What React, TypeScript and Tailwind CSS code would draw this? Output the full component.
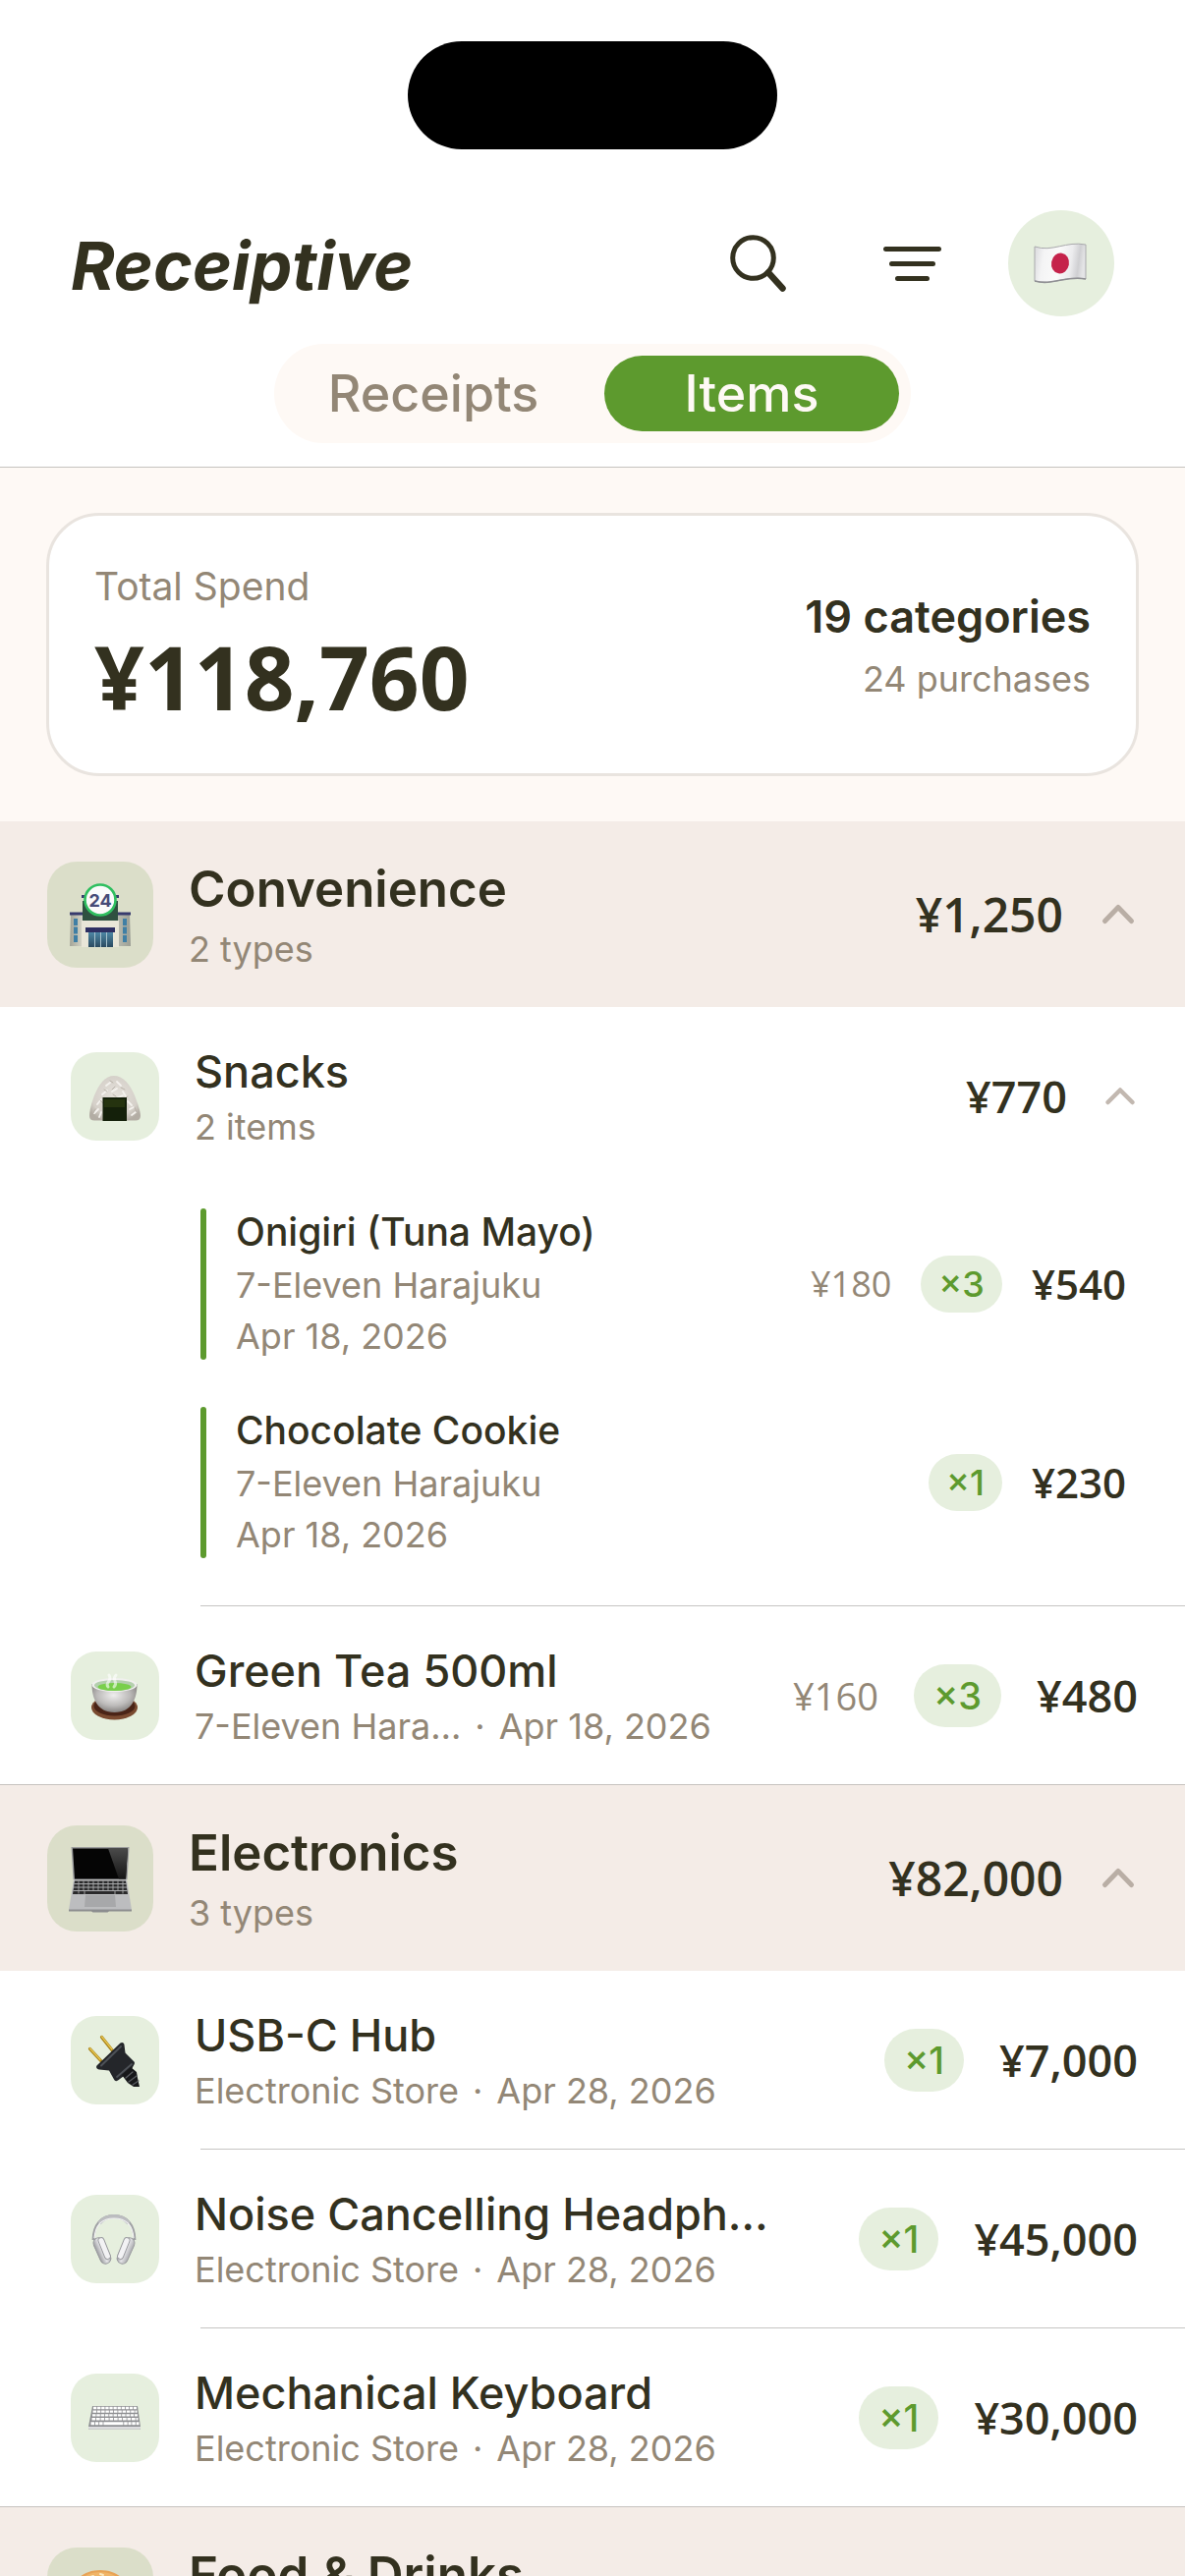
import type { ReactNode } from "react";

/* ---------- emoji artwork ---------- */

function FlagArt() {
  return (
    <svg viewBox="0 0 108 108" className="size-full" aria-hidden="true">
      <defs>
        <linearGradient id="flag" x1="0" x2="1" y1="0" y2="0.1">
          <stop offset="0" stopColor="#d9d9dc" />
          <stop offset="0.2" stopColor="#f4f4f5" />
          <stop offset="0.5" stopColor="#fafafa" />
          <stop offset="0.75" stopColor="#ececee" />
          <stop offset="0.9" stopColor="#cfcfd2" />
          <stop offset="1" stopColor="#e4e4e6" />
        </linearGradient>
      </defs>
      <path d="M27 37c18 6 32-6 52-2v35c-20-4-34 7-52 2z" fill="url(#flag)" stroke="#a9a9ac" strokeWidth="1" />
      <path d="M27 72c18 5 32-6 52-2" fill="none" stroke="#8f8f93" strokeWidth="1.6" />
      <ellipse cx="53" cy="54" rx="9" ry="10.5" fill="#c5234b" transform="rotate(10 53 54)" />
    </svg>
  );
}

function StoreArt() {
  return (
    <svg viewBox="0 0 108 108" className="size-full" aria-hidden="true">
      <defs>
        <linearGradient id="wing" x1="0" x2="1">
          <stop offset="0" stopColor="#a3a497" />
          <stop offset="1" stopColor="#d9d8cb" />
        </linearGradient>
        <linearGradient id="wingRight" x1="0" x2="1">
          <stop offset="0" stopColor="#b9bbb0" />
          <stop offset="1" stopColor="#9c9f95" />
        </linearGradient>
        <linearGradient id="door" x1="0" x2="0" y1="0" y2="1">
          <stop offset="0" stopColor="#4d87a5" />
          <stop offset="1" stopColor="#2b4a60" />
        </linearGradient>
      </defs>
      <path d="M24 54h13v32H23z" fill="url(#wing)" />
      <path d="M71 54h13l1 32H71z" fill="url(#wingRight)" />
      <path d="M23 51.500h14v3H23zM71 51.500h14v3H71zM35 34h38v3H35z" fill="#373a6d" />
      <path d="M36 40h36v20H36z" fill="#2f5140" />
      <path d="M35 60h38v27H35z" fill="#e9e6d8" />
      <path d="M27 58h4v7h-4zM27 66.500h4v7h-4zM27 75h4v7h-4zM77 58h4v7h-4zM77 66.500h4v7h-4zM77 75h4v7h-4z" fill="#3f7fa5" />
      <path d="M39 67h30v5H39z" fill="#2e2f62" />
      <path d="M42 72h25v15H42z" fill="url(#door)" />
      <path d="M48.500 72v15M54.500 72v15M60.500 72v15" stroke="#a8c2cd" strokeWidth="1" />
      <circle cx="54" cy="39" r="15.500" fill="#fbfbfb" stroke="#2fbf60" strokeWidth="2.600" />
      <text x="54" y="45.500" textAnchor="middle" fontSize="18" fontWeight="700" fontFamily="Inter, sans-serif" fill="#474b78">24</text>
    </svg>
  );
}

function LaptopArt() {
  return (
    <svg viewBox="0 0 108 108" className="size-full" aria-hidden="true">
      <defs>
        <linearGradient id="glare" x1="0" x2="0" y1="0" y2="1">
          <stop offset="0" stopColor="#4a4a4a" />
          <stop offset="1" stopColor="#161616" />
        </linearGradient>
      </defs>
      <path d="M24.500 22h59l-2 33h-55z" fill="#9a9b9c" />
      <path d="M26 23.500h56l-2 31H28z" fill="#050505" />
      <path d="M62 23.500h20l-2 31H73z" fill="url(#glare)" />
      <path d="M27 55h54l5 31H22z" fill="#bcbdbf" />
      <path d="M28 56.500h52l2 13.500H26z" fill="#2a2a2b" />
      <path d="M27.500 59.500h53M27 63h54M26.500 66.500h55" stroke="#b9babc" strokeWidth="0.9" />
      <path d="M32 56.500v13M37 56.500v10M42 56.500v10M47 56.500v10M52 56.500v10M57 56.500v10M62 56.500v10M67 56.500v10M72 56.500v10M77 56.500v13M38 67v3M69 67v3" stroke="#a9aaac" strokeWidth="0.9" />
      <path d="M39 71h30l1 12H38z" fill="#a7a8aa" />
      <path d="M22 85.500h64v2H63l-1.500 1h-15l-1.500-1H22z" fill="#8c8d8f" />
    </svg>
  );
}

function OnigiriArt() {
  return (
    <svg viewBox="0 0 90 90" className="size-full" aria-hidden="true">
      <defs>
        <radialGradient id="rice" cx="0.5" cy="0.45" r="0.6">
          <stop offset="0" stopColor="#e6e2dc" />
          <stop offset="0.75" stopColor="#d5d0c9" />
          <stop offset="1" stopColor="#b3ada4" />
        </radialGradient>
      </defs>
      <path d="M44 24c9 0 16 8 21 20 3 8 6 16 6 21 0 3-2 4.500-5 4.500H24c-3 0-5-1.500-5-4.500 0-5 2-13 5-21 5-12 11-20 20-20z" fill="url(#rice)" />
      <path d="M36 34l4-3M47 30l4 4M32 43l5-4M42 40l5-3M53 40l3 5M27 53l4-5M36 47l4 2M48 46l5-2M58 50l4 4M24 62l4-4M29 66l2-5M62 64l4-3M60 58l4-2" stroke="#f4f2ee" strokeWidth="1.800" strokeLinecap="round" />
      <path d="M40 29l3 2M34 38l3 2M45 35l-3 3M51 36l4 2M30 49l3 3M43 43l3 2M55 47l3-2M25 58l-2 4M65 56l2 5" stroke="#b9b3aa" strokeWidth="1" strokeLinecap="round" />
      <path d="M32.500 46h24.500v24H32.500z" fill="#14200a" />
      <path d="M34 48h21v8H34z" fill="#25330f" />
    </svg>
  );
}

function TeaArt() {
  return (
    <svg viewBox="0 0 90 90" className="size-full" aria-hidden="true">
      <defs>
        <radialGradient id="cup" cx="0.48" cy="0.4" r="0.6">
          <stop offset="0" stopColor="#efeeee" />
          <stop offset="0.6" stopColor="#bdbbba" />
          <stop offset="1" stopColor="#858280" />
        </radialGradient>
      </defs>
      <ellipse cx="44.500" cy="57" rx="23.500" ry="12.500" fill="#7a4a30" />
      <ellipse cx="44.500" cy="55.500" rx="21" ry="10" fill="#4a2417" />
      <path d="M21.500 33c0 14 5 29 23 29s23-15 23-29z" fill="url(#cup)" />
      <ellipse cx="44.500" cy="34" rx="23" ry="7" fill="#f0f0ee" />
      <ellipse cx="44.500" cy="34.500" rx="20.500" ry="5.500" fill="#b4cfae" />
      <ellipse cx="44.500" cy="36" rx="17" ry="4" fill="#79cf4c" />
      <path d="M38 36c-4-4 5-6 1-12M44 36c5-5-3-7 2-12" fill="none" stroke="#ffffff" strokeOpacity="0.6" strokeWidth="3" strokeLinecap="round" />
    </svg>
  );
}

function PlugArt() {
  return (
    <svg viewBox="0 0 90 90" className="size-full" aria-hidden="true">
      <path d="M31.500 21.500L43 36M19.500 33.500L32 47" stroke="#a9851e" strokeWidth="3.200" strokeLinecap="round" />
      <path d="M31.500 21L42 34M19.500 33L30 44.500" stroke="#e9c74f" strokeWidth="1.200" strokeLinecap="round" />
      <path d="M50.500 27.500c2-1.500 4 0 4 2l1 8 9 9c1.500 2-1 4-1.500 6l-4 5-11 8c-2 1.500-3 .5-4-1l-5-9-10-1c-3-.5-4-3-1.500-5z" fill="#24262a" />
      <path d="M51 31L31 50.500" stroke="#4d5157" strokeWidth="2" strokeLinecap="round" />
      <path d="M62 49L47 62" stroke="#4d5157" strokeWidth="1.800" strokeLinecap="round" />
      <path d="M52 60l9-8 6 5 1 6 2 9h-6l-6-4z" fill="#17181a" />
      <path d="M56 63l7-6M59 67l8-6M63 70l6-4" stroke="#5a5d62" strokeWidth="1.300" strokeLinecap="round" />
    </svg>
  );
}

function HeadphonesArt() {
  return (
    <svg viewBox="0 0 90 90" className="size-full" aria-hidden="true">
      <defs>
        <linearGradient id="cups" x1="0" x2="1">
          <stop offset="0" stopColor="#9a9b9f" />
          <stop offset="0.5" stopColor="#e3e3e6" />
          <stop offset="1" stopColor="#aaabaf" />
        </linearGradient>
      </defs>
      <path d="M23 46c0-15 8-24.500 21-24.500S65 31 65 46" fill="none" stroke="#a0a1a4" strokeWidth="2.800" />
      <path d="M29 29c4-5 9-7 15-7s11 2 15 7" fill="none" stroke="#bcbdc0" strokeWidth="4" />
      <path d="M24 44c1-13 8-20 20-20s19 7 20 20" fill="none" stroke="#f3f3f4" strokeWidth="1.200" />
      <g stroke="#97989c" strokeWidth="0.900">
        <rect x="26" y="43" width="11" height="28" rx="5.500" fill="url(#cups)" transform="rotate(-24 31.500 56)" />
        <rect x="51" y="43" width="11" height="28" rx="5.500" fill="url(#cups)" transform="rotate(24 56.500 56)" />
        <rect x="31" y="43" width="6" height="23" rx="3" fill="#f2f2f4" transform="rotate(-22 34 54)" />
        <rect x="51" y="43" width="6" height="23" rx="3" fill="#f2f2f4" transform="rotate(22 54 54)" />
      </g>
    </svg>
  );
}

function KeyboardArt() {
  return (
    <svg viewBox="0 0 90 90" className="size-full" aria-hidden="true">
      <path d="M22 33h46l3 21v2.500H18V54z" fill="#8f9093" />
      <path d="M18 54h53v1.500a1 1 0 01-1 1H19a1 1 0 01-1-1z" fill="#dcdcde" />
      <g stroke="#ffffff" fill="none">
        <path d="M23 35h44" strokeWidth="2.400" strokeDasharray="3.300 0.800" />
        <path d="M22.500 38.700h45" strokeWidth="2.300" strokeDasharray="3.500 0.800" />
        <path d="M22 42.400h46" strokeWidth="2.400" strokeDasharray="3.500 0.800" />
        <path d="M21.500 46.300h47" strokeWidth="2.600" strokeDasharray="3.700 0.800" />
        <path d="M20.500 50.700h49" strokeWidth="2.900" strokeDasharray="3.500 0.800 3.500 0.800 3.500 0.800 20 0.800 3.500 0.800 3 0.800" />
      </g>
    </svg>
  );
}

function BurgerArt() {
  return (
    <svg viewBox="0 0 108 108" className="size-full" aria-hidden="true">
      <path d="M24 50c0-16 13-27 30-27s30 11 30 27z" fill="#e8a355" />
      <path d="M30 38c5-9 14-13 24-13s19 4 24 13c-8-4-40-4-48 0z" fill="#f0b568" />
      <path d="M44 30l3-1M54 27l3 1M62 31l3 1M50 34l3-1M38 36l3-1M69 36l2 1" stroke="#fbe8bf" strokeWidth="2" strokeLinecap="round" />
      <path d="M22 52h64v7H22z" fill="#6aa536" />
      <path d="M24 59h60v10H24z" fill="#6b3a20" />
      <path d="M24 70h60c0 9-5 14-12 14H36c-7 0-12-5-12-14z" fill="#d98f45" />
    </svg>
  );
}

/* ---------- shared pieces ---------- */

function Chevron({ large }: { large?: boolean }) {
  return large ? (
    <svg viewBox="0 0 40 24" className="w-10 shrink-0" fill="none" stroke="#b9aea5" strokeWidth="5" strokeLinecap="round" strokeLinejoin="round" aria-hidden="true">
      <path d="M6.500 18.500L20 4.500l13.500 14" />
    </svg>
  ) : (
    <svg viewBox="0 0 36 22" className="w-9 shrink-0" fill="none" stroke="#c2b8b0" strokeWidth="4.500" strokeLinecap="round" strokeLinejoin="round" aria-hidden="true">
      <path d="M5.500 17L18 4.500 30.500 17" />
    </svg>
  );
}

function Badge({ count, small }: { count: number; small?: boolean }) {
  return (
    <span
      className={
        small
          ? "shrink-0 rounded-full bg-[#e6efde] px-[18px] text-[36px] leading-[58px] font-medium text-[#5d9a2e]"
          : "shrink-0 rounded-full bg-[#e6efde] px-5 text-[38px] leading-[64px] font-medium text-[#5d9a2e]"
      }
    >
      ×{count}
    </span>
  );
}

const price = "shrink-0 font-['Open_Sans','Noto_Sans',sans-serif] tabular-nums";

type GroupProps = { art: ReactNode; name: string; types?: string; total?: string; divided?: boolean; children?: ReactNode };

function Group({ art, name, types, total, divided, children }: GroupProps) {
  return (
    <section>
      <button
        type="button"
        aria-expanded={children ? "true" : "false"}
        className={`flex w-full items-center bg-[#f4ece7] px-12 py-9 text-left ${divided ? "border-t border-[#c6c3c0]" : ""}`}
      >
        <span className="size-27 shrink-0 overflow-hidden rounded-[30px] bg-[#dbdec9]">{art}</span>
        <span className="ml-9 flex min-w-0 flex-1 flex-col gap-[5px]">
          <span className="truncate text-[51px] leading-[66px] font-semibold">{name}</span>
          <span className="min-h-[46px] text-[36px] leading-[46px] text-[#938776]">{types}</span>
        </span>
        {total && <span className={`${price} mr-9 text-[48px] leading-[60px] font-semibold`}>{total}</span>}
        <Chevron large />
      </button>
      {children}
    </section>
  );
}

function ItemTile({ children }: { children: ReactNode }) {
  return <span className="size-22.5 shrink-0 overflow-hidden rounded-[26px] bg-[#e6efde]">{children}</span>;
}

type ItemProps = { art: ReactNode; name: string; store: string; date: string; unit?: string; count: number; total: string; last?: boolean };

function Item({ art, name, store, date, unit, count, total, last }: ItemProps) {
  return (
    <li>
      <div className="flex items-center py-9 pr-12 pl-18">
        <ItemTile>{art}</ItemTile>
        <div className="ml-9 flex min-w-0 flex-1 flex-col gap-[3px]">
          <span className="text-[45px] leading-[60px] font-medium whitespace-nowrap">{name}</span>
          <span className="flex gap-3.5 text-[36px] leading-[46px] whitespace-nowrap text-[#938776]">
            <span>{store}</span>
            <span>·</span>
            <span>{date}</span>
          </span>
        </div>
        <div className="flex shrink-0 items-center gap-9">
          {unit && <span className={`${price} text-[38px] leading-[46px] text-[#938776]`}>{unit}</span>}
          <Badge count={count} />
          <span className={`${price} text-[45px] leading-[60px] font-semibold`}>{total}</span>
        </div>
      </div>
      {!last && <div className="ml-51 h-px bg-[#c6c5c3]" />}
    </li>
  );
}

type PurchaseProps = { name: string; store: string; date: string; unit?: string; count: number; total: string };

function Purchase({ name, store, date, unit, count, total }: PurchaseProps) {
  return (
    <li className="flex items-center py-[22px] pr-15 pl-51">
      <span className="h-[154px] w-1.5 shrink-0 rounded-full bg-[#5d9a2e]" />
      <div className="ml-[30px] flex min-w-0 flex-1 flex-col">
        <span className="mb-0.5 text-[39px] leading-[52px] font-medium">{name}</span>
        <span className="text-[36px] leading-[52px] text-[#938776]">{store}</span>
        <span className="text-[36px] leading-[52px] text-[#938776]">{date}</span>
      </div>
      <div className="flex shrink-0 items-center gap-[30px]">
        {unit && <span className={`${price} text-[36px] leading-[46px] text-[#938776]`}>{unit}</span>}
        <Badge count={count} small />
        <span className={`${price} text-[42px] leading-[52px] font-semibold`}>{total}</span>
      </div>
    </li>
  );
}

/* ---------- page ---------- */

export default function App() {
  return (
    <div className="flex h-screen flex-col overflow-hidden bg-white font-['Inter','Noto_Sans',sans-serif] text-[#33311f]">
      <header className="shrink-0 border-b border-[#c6c3c0] bg-white pt-[42px] pb-6">
        <div className="mx-auto h-[110px] w-[376px] rounded-full bg-black" />
        <div className="mt-[62px] flex items-center gap-11 px-18">
          <h1 className="flex-1 pt-1 text-[68px] leading-[84px] font-bold italic">Receiptive</h1>
          <button type="button" aria-label="Search" className="size-27">
            <svg viewBox="0 0 108 108" className="size-full" fill="none" stroke="#33311f" strokeLinecap="round" aria-hidden="true">
              <circle cx="44.500" cy="48.500" r="20.800" strokeWidth="5" />
              <path d="M60 63.500l14.500 16" strokeWidth="6.500" />
            </svg>
          </button>
          <button type="button" aria-label="Sort and filter" className="size-27">
            <svg viewBox="0 0 108 108" className="size-full" fill="none" stroke="#33311f" strokeWidth="5" strokeLinecap="round" aria-hidden="true">
              <path d="M27.500 39.500h54M33.500 54.500h42M39.500 69.500h30" />
            </svg>
          </button>
          <button type="button" aria-label="Region: Japan" className="size-27 rounded-full bg-[#e6efde]">
            <FlagArt />
          </button>
        </div>
        <div role="tablist" aria-label="View" className="mx-auto mt-7 flex w-fit gap-6 rounded-full bg-[#fef9f5] p-3 text-[52px] leading-[77px] font-medium">
          <button type="button" role="tab" aria-selected="false" className="w-75 rounded-full text-[#938776]">Receipts</button>
          <button type="button" role="tab" aria-selected="true" className="w-75 rounded-full bg-[#5d9a2e] text-[#fef9f5]">Items</button>
        </div>
      </header>

      <main className="flex-1 overflow-y-auto bg-[#fef9f5] [scrollbar-width:none]">
        <div className="mx-[47px] my-[46px] flex items-center justify-between rounded-[54px] border-3 border-[#e9e4df] bg-white px-[46px] py-[46px]">
          <div className="flex flex-col gap-3.5">
            <span className="text-[39px] leading-[52px] text-[#938776]">Total Spend</span>
            <span className="font-['Open_Sans','Noto_Sans',sans-serif] text-[89px] leading-[104px] font-bold tabular-nums">¥118,760</span>
          </div>
          <div className="flex flex-col gap-2.5 text-right">
            <span className="text-[45px] leading-[60px] font-semibold">19 categories</span>
            <span className="text-[36px] leading-[46px] text-[#938776]">24 purchases</span>
          </div>
        </div>

        <Group art={<StoreArt />} name="Convenience" types="2 types" total="¥1,250">
          <ul className="bg-white">
            <li>
              <button type="button" aria-expanded="true" className="flex w-full items-center py-9 pr-12 pl-18 text-left">
                <ItemTile><OnigiriArt /></ItemTile>
                <span className="ml-9 flex flex-1 flex-col gap-[3px]">
                  <span className="text-[45px] leading-[60px] font-medium">Snacks</span>
                  <span className="text-[36px] leading-[46px] text-[#938776]">2 items</span>
                </span>
                <span className={`${price} mr-9 text-[45px] leading-[60px] font-semibold`}>¥770</span>
                <Chevron />
              </button>
              <ul className="pb-6">
                <Purchase name="Onigiri (Tuna Mayo)" store="7-Eleven Harajuku" date="Apr 18, 2026" unit="¥180" count={3} total="¥540" />
                <Purchase name="Chocolate Cookie" store="7-Eleven Harajuku" date="Apr 18, 2026" count={1} total="¥230" />
              </ul>
              <div className="ml-51 h-px bg-[#c6c5c3]" />
            </li>
            <Item art={<TeaArt />} name="Green Tea 500ml" store="7-Eleven Hara…" date="Apr 18, 2026" unit="¥160" count={3} total="¥480" last />
          </ul>
        </Group>

        <Group art={<LaptopArt />} name="Electronics" types="3 types" total="¥82,000" divided>
          <ul className="bg-white">
            <Item art={<PlugArt />} name="USB-C Hub" store="Electronic Store" date="Apr 28, 2026" count={1} total="¥7,000" />
            <Item art={<HeadphonesArt />} name="Noise Cancelling Headph…" store="Electronic Store" date="Apr 28, 2026" count={1} total="¥45,000" />
            <Item art={<KeyboardArt />} name="Mechanical Keyboard" store="Electronic Store" date="Apr 28, 2026" count={1} total="¥30,000" last />
          </ul>
        </Group>

        <Group art={<BurgerArt />} name="Food & Drinks" divided />
      </main>
    </div>
  );
}
